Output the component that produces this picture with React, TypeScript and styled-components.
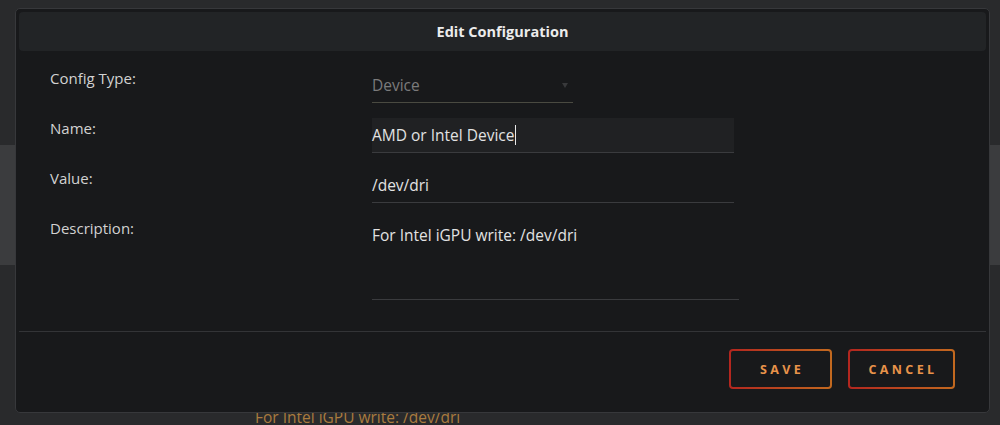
import React from 'react'
import { styled, createGlobalStyle } from 'styled-components'

const GlobalStyle = createGlobalStyle`
html, body {
  margin: 0;
  padding: 0;
  background: #292a2c;
  font-family: "Open Sans", "Noto Sans", sans-serif;
  overflow: hidden;
}
`

const Page = styled.div`
position: relative;
width: 1000px;
height: 425px;
background: #292a2c;
overflow: hidden;
`

const BackRow = styled.div`
margin-top: 145px;
height: 120px;
background: #3b3c3e;
`

const BackHint = styled.div`
padding: 144px 0 0 255px;
font-size: 15.5px;
line-height: 16px;
color: #a97b3e;
white-space: nowrap;
`

const Modal = styled.div`
position: absolute;
top: 8px;
left: 15px;
width: 975px;
height: 405px;
box-sizing: border-box;
background: #18191b;
border: 1px solid #37383b;
border-radius: 5px;
padding: 3px;
display: flex;
flex-direction: column;
`

const Header = styled.div`
height: 39px;
background: #222426;
border-radius: 4px;
display: flex;
align-items: center;
justify-content: center;
color: #ececec;
font-size: 14.5px;
font-weight: 700;
`

const Body = styled.div`
padding: 17px 0 0 31px;
display: flex;
flex-direction: column;
gap: 15px;
`

const Row = styled.div`
display: flex;
align-items: flex-start;
`

const Label = styled.div`
width: 322px;
flex: none;
font-size: 15px;
line-height: 20px;
color: #d2d2d2;
`

const Field = styled.div<{ $width: number; $height?: number; $filled?: boolean; $line?: string; $muted?: boolean }>`
position: relative;
width: ${({ $width }) => $width}px;
height: ${({ $height }) => $height ?? 34}px;
box-sizing: content-box;
background: ${({ $filled }) => ($filled ? '#202123' : 'transparent')};
border-bottom: 1px solid ${({ $line }) => $line ?? '#3a3b3e'};
font-size: 15.5px;
line-height: 34px;
color: ${({ $muted }) => ($muted ? '#7b7b7c' : '#e2e2e2')};
display: flex;
align-items: flex-start;
white-space: nowrap;
`

const Caret = styled.span`
display: inline-block;
width: 1px;
height: 20px;
margin: 7px 0 0 1px;
background: #e8e8e8;
`

const Arrow = styled.span`
position: absolute;
right: 5px;
top: 15px;
width: 0;
height: 0;
border-left: 3px solid transparent;
border-right: 3px solid transparent;
border-top: 5px solid #38393b;
`

const Divider = styled.div`
margin-top: 31px;
height: 1px;
background: #333437;
`

const Footer = styled.div`
display: flex;
justify-content: flex-end;
gap: 16px;
padding: 17px 31px 0 0;
`

const Button = styled.button<{ $width: number }>`
width: ${({ $width }) => $width}px;
height: 40px;
border: 2px solid transparent;
border-radius: 4px;
background:
  linear-gradient(#18191b, #18191b) padding-box,
  linear-gradient(to right, #b3261f, #c2691f) border-box;
color: #e8934a;
font-family: "Open Sans", "Noto Sans", sans-serif;
font-size: 12.5px;
font-weight: 700;
letter-spacing: 3.4px;
padding: 0 0 0 3px;
cursor: pointer;
`

const rows = [
  { label: 'Config Type:', value: 'Device', width: 201, muted: true, line: '#4a4a41', select: true },
  { label: 'Name:', value: 'AMD or Intel Device', width: 362, filled: true, caret: true },
  { label: 'Value:', value: '/dev/dri', width: 362 },
  { label: 'Description:', value: 'For Intel iGPU write: /dev/dri', width: 367, height: 81 },
]

export default function App() {
  return (
    <Page>
      <GlobalStyle />
      <BackRow />
      <BackHint>For Intel iGPU write: /dev/dri</BackHint>
      <Modal>
        <Header>Edit Configuration</Header>
        <Body>
          {rows.map((r) => (
            <Row key={r.label}>
              <Label>{r.label}</Label>
              <Field $width={r.width} $height={r.height} $filled={r.filled} $line={r.line} $muted={r.muted}>
                {r.value}
                {r.caret && <Caret />}
                {r.select && <Arrow />}
              </Field>
            </Row>
          ))}
        </Body>
        <Divider />
        <Footer>
          <Button $width={103}>SAVE</Button>
          <Button $width={107}>CANCEL</Button>
        </Footer>
      </Modal>
    </Page>
  )
}
